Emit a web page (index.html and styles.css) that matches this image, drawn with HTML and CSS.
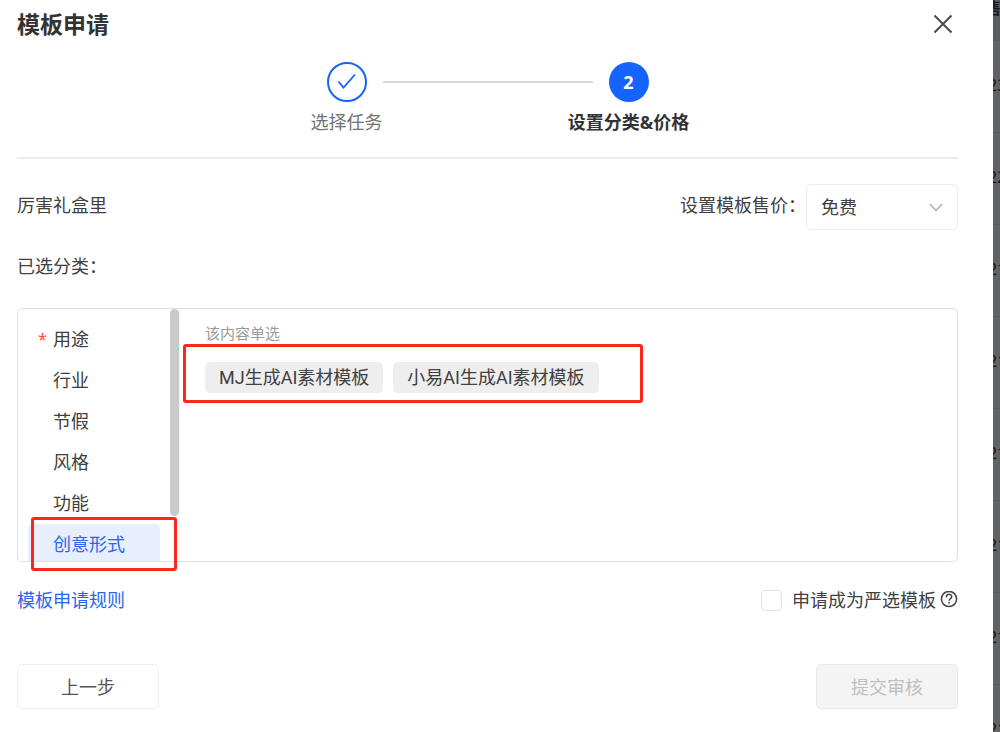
FILE: index.html
```
<!DOCTYPE html>
<html lang="zh-CN">
<head>
<meta charset="utf-8">
<title>模板申请</title>
<link rel="stylesheet" href="styles.css">
</head>
<body>
<div class="page">
  <main class="dialog">
    <header class="dialog-head">
      <h1 class="title">模板申请</h1>
      <button class="close" type="button" aria-label="关闭">
        <svg width="20" height="20" viewBox="0 0 20 20"><path d="M1.500 1.500 18.500 18.500M18.500 1.500 1.500 18.500" fill="none" stroke="#4a4a4a" stroke-width="2"/></svg>
      </button>
    </header>

    <ol class="steps">
      <li class="step">
        <span class="dot dot-done"><svg width="20" height="18" viewBox="0 0 20 18"><path d="M1.500 8.500 6.500 14.500 18 1.500" fill="none" stroke="#1664ff" stroke-width="1.800"/></svg></span>
        <span class="step-label">选择任务</span>
      </li>
      <li class="step-line" aria-hidden="true"></li>
      <li class="step step-current">
        <span class="dot dot-current">2</span>
        <span class="step-label">设置分类&amp;价格</span>
      </li>
    </ol>

    <div class="info">
      <span class="name">厉害礼盒里</span>
      <div class="price">
        <label for="price">设置模板售价：</label>
        <div class="select-wrap">
          <select id="price" class="select"><option>免费</option></select>
          <svg class="chevron" width="14" height="9" viewBox="0 0 14 9"><path d="M.7 1 7 7.500 13.300 1" fill="none" stroke="#a8a8a8" stroke-width="1.300"/></svg>
        </div>
      </div>
    </div>

    <p class="chosen">已选分类：</p>

    <section class="picker">
      <div class="panel">
        <nav class="cats">
          <button class="cat cat-required" type="button">用途</button>
          <button class="cat" type="button">行业</button>
          <button class="cat" type="button">节假</button>
          <button class="cat" type="button">风格</button>
          <button class="cat" type="button">功能</button>
          <button class="cat cat-active" type="button">创意形式</button>
        </nav>
        <div class="track"><div class="thumb"></div></div>
        <div class="options">
          <p class="hint">该内容单选</p>
          <div class="tags">
            <button class="tag" type="button">MJ生成AI素材模板</button>
            <button class="tag" type="button">小易AI生成AI素材模板</button>
          </div>
        </div>
      </div>
      <div class="mark mark-tags"></div>
      <div class="mark mark-cat"></div>
    </section>

    <div class="rules">
      <a class="link" href="#">模板申请规则</a>
      <div class="strict">
        <input class="check" type="checkbox" id="strict">
        <label for="strict">申请成为严选模板</label>
        <svg class="help" width="18" height="18" viewBox="0 0 18 18" fill="none" stroke="#444" stroke-width="1.500"><circle cx="9" cy="8" r="7.600"/><path d="M6.400 6.200C6.400 2.400 11.700 2.500 11.700 5.700 11.700 7.500 9.100 7.700 9.100 9.800M9.100 11v1.700"/></svg>
      </div>
    </div>

    <footer class="actions">
      <button class="btn" type="button">上一步</button>
      <button class="btn" type="button" disabled>提交审核</button>
    </footer>
  </main>

  <aside class="backdrop">
    <div class="back-head">售</div>
    <div class="back-row">23</div>
    <div class="back-row">22</div>
    <div class="back-row">21</div>
    <div class="back-row">21</div>
    <div class="back-row">21</div>
    <div class="back-row">21</div>
    <div class="back-row">21</div>
    <div class="back-row">21</div>
  </aside>
</div>
</body>
</html>
```
FILE: styles.css
```
* { box-sizing: border-box; }

body {
  margin: 0;
  background: #fff;
  color: #404040;
  font: 18px/24px "Noto Sans", "Noto Sans CJK SC", sans-serif;
}

button, select { font: inherit; color: inherit; }

button { padding: 0; border: 0; background: none; }

p, h1, ol { margin: 0; padding: 0; }

.page {
  display: flex;
  height: 100vh;
  overflow: hidden;
}

.dialog {
  flex: 1;
  min-width: 0;
  padding: 0 35px 0 17px;
}

.dialog-head {
  display: flex;
  align-items: center;
  justify-content: space-between;
  height: 48px;
}

.title {
  font-size: 23px;
  line-height: 48px;
  font-weight: 700;
  color: #333;
}

.close { width: 20px; height: 20px; margin-right: 5px; }

.close svg, .dot svg { display: block; }

.steps {
  display: flex;
  justify-content: center;
  height: 111px;
  padding-top: 14px;
  border-bottom: 2px solid #e9edf0;
  list-style: none;
}

.step {
  display: flex;
  flex-direction: column;
  align-items: center;
  gap: 8px;
  width: 72px;
  color: #737373;
  white-space: nowrap;
}

.step-current { color: #333; font-weight: 700; }

.step-line {
  width: 210px;
  height: 2px;
  margin: 19px 0 0;
  background: #d6d6d6;
}

.dot {
  display: flex;
  flex-shrink: 0;
  align-items: center;
  justify-content: center;
  width: 40px;
  height: 40px;
  border-radius: 50%;
}

.dot-done { border: 2px solid #1664ff; }

.dot-current { background: #1664ff; color: #fff; }

.info {
  display: flex;
  align-items: center;
  justify-content: space-between;
  margin-top: 25px;
}

.name { padding-bottom: 4px; }

.price { display: flex; align-items: center; }

.price label { padding-bottom: 4px; }

.select-wrap { position: relative; width: 152px; }

.select {
  display: block;
  width: 100%;
  height: 46px;
  padding: 0 14px;
  border: 1px solid #ececec;
  border-radius: 5px;
  background: #fff;
  appearance: none;
}

.chevron { position: absolute; top: 19px; right: 15px; pointer-events: none; }

.chosen { margin-top: 24px; }

.picker { position: relative; margin-top: 30px; }

.panel {
  display: flex;
  height: 254px;
  border: 1px solid #dce2e7;
  border-radius: 5px;
  overflow: hidden;
}

.cats {
  display: flex;
  flex-direction: column;
  flex-shrink: 0;
  gap: 1px;
  width: 152px;
  padding: 10px 10px 0;
}

.cat {
  position: relative;
  flex: 0 0 40px;
  padding-left: 25px;
  border-radius: 5px;
  text-align: left;
}

.cat-required::before {
  content: "*";
  position: absolute;
  top: 8px;
  left: 10px;
  color: #ff4d3d;
  font-size: 16px;
}

.cat-active { background: #e7eefe; color: #2468f2; }

.track { flex-shrink: 0; width: 10px; border-right: 1px solid #f0f2f4; }

.thumb { height: 207px; border-radius: 5px; background: #c9c9c9; }

.options { padding: 12px 25px; }

.hint { font-size: 15px; color: #999; }

.tags { display: flex; gap: 10px; margin-top: 17px; }

.tag {
  height: 31px;
  padding: 0 14px;
  border-radius: 5px;
  background: #eee;
  font-family: Roboto, "Noto Sans CJK SC", sans-serif;
}

.mark {
  position: absolute;
  border: 3px solid #f9281c;
  border-radius: 3px;
  pointer-events: none;
}

.mark-tags { top: 36px; left: 166px; width: 460px; height: 59px; }

.mark-cat { top: 209px; left: 14px; width: 146px; height: 54px; }

.rules {
  display: flex;
  justify-content: space-between;
  margin-top: 26px;
}

.link { color: #2468f2; text-decoration: none; }

.strict { display: flex; align-items: center; }

.check {
  width: 21px;
  height: 21px;
  margin: 0 10px 0 0;
  border: 1px solid #dce2e7;
  border-radius: 4px;
  background: #fff;
  appearance: none;
}

.help { margin-left: 4px; }

.actions {
  display: flex;
  justify-content: space-between;
  margin-top: 52px;
}

.btn {
  width: 142px;
  height: 45px;
  border: 1px solid #eceeef;
  border-radius: 5px;
  background: #fff;
  color: #555;
}

.btn:disabled { background: #f4f4f4; border-color: #e8e8e8; color: #bfbfbf; }

.backdrop {
  width: 7px;
  overflow: hidden;
  background: #616263;
  color: #15181f;
  font-size: 16px;
  white-space: nowrap;
}

.back-head {
  height: 40px;
  background: #5b5d63;
  line-height: 16px;
  text-indent: -8px;
  font-weight: 700;
}

.back-row {
  height: 92px;
  border-top: 1px solid #5a5b5c;
  line-height: 88px;
  text-indent: -5px;
}
```
